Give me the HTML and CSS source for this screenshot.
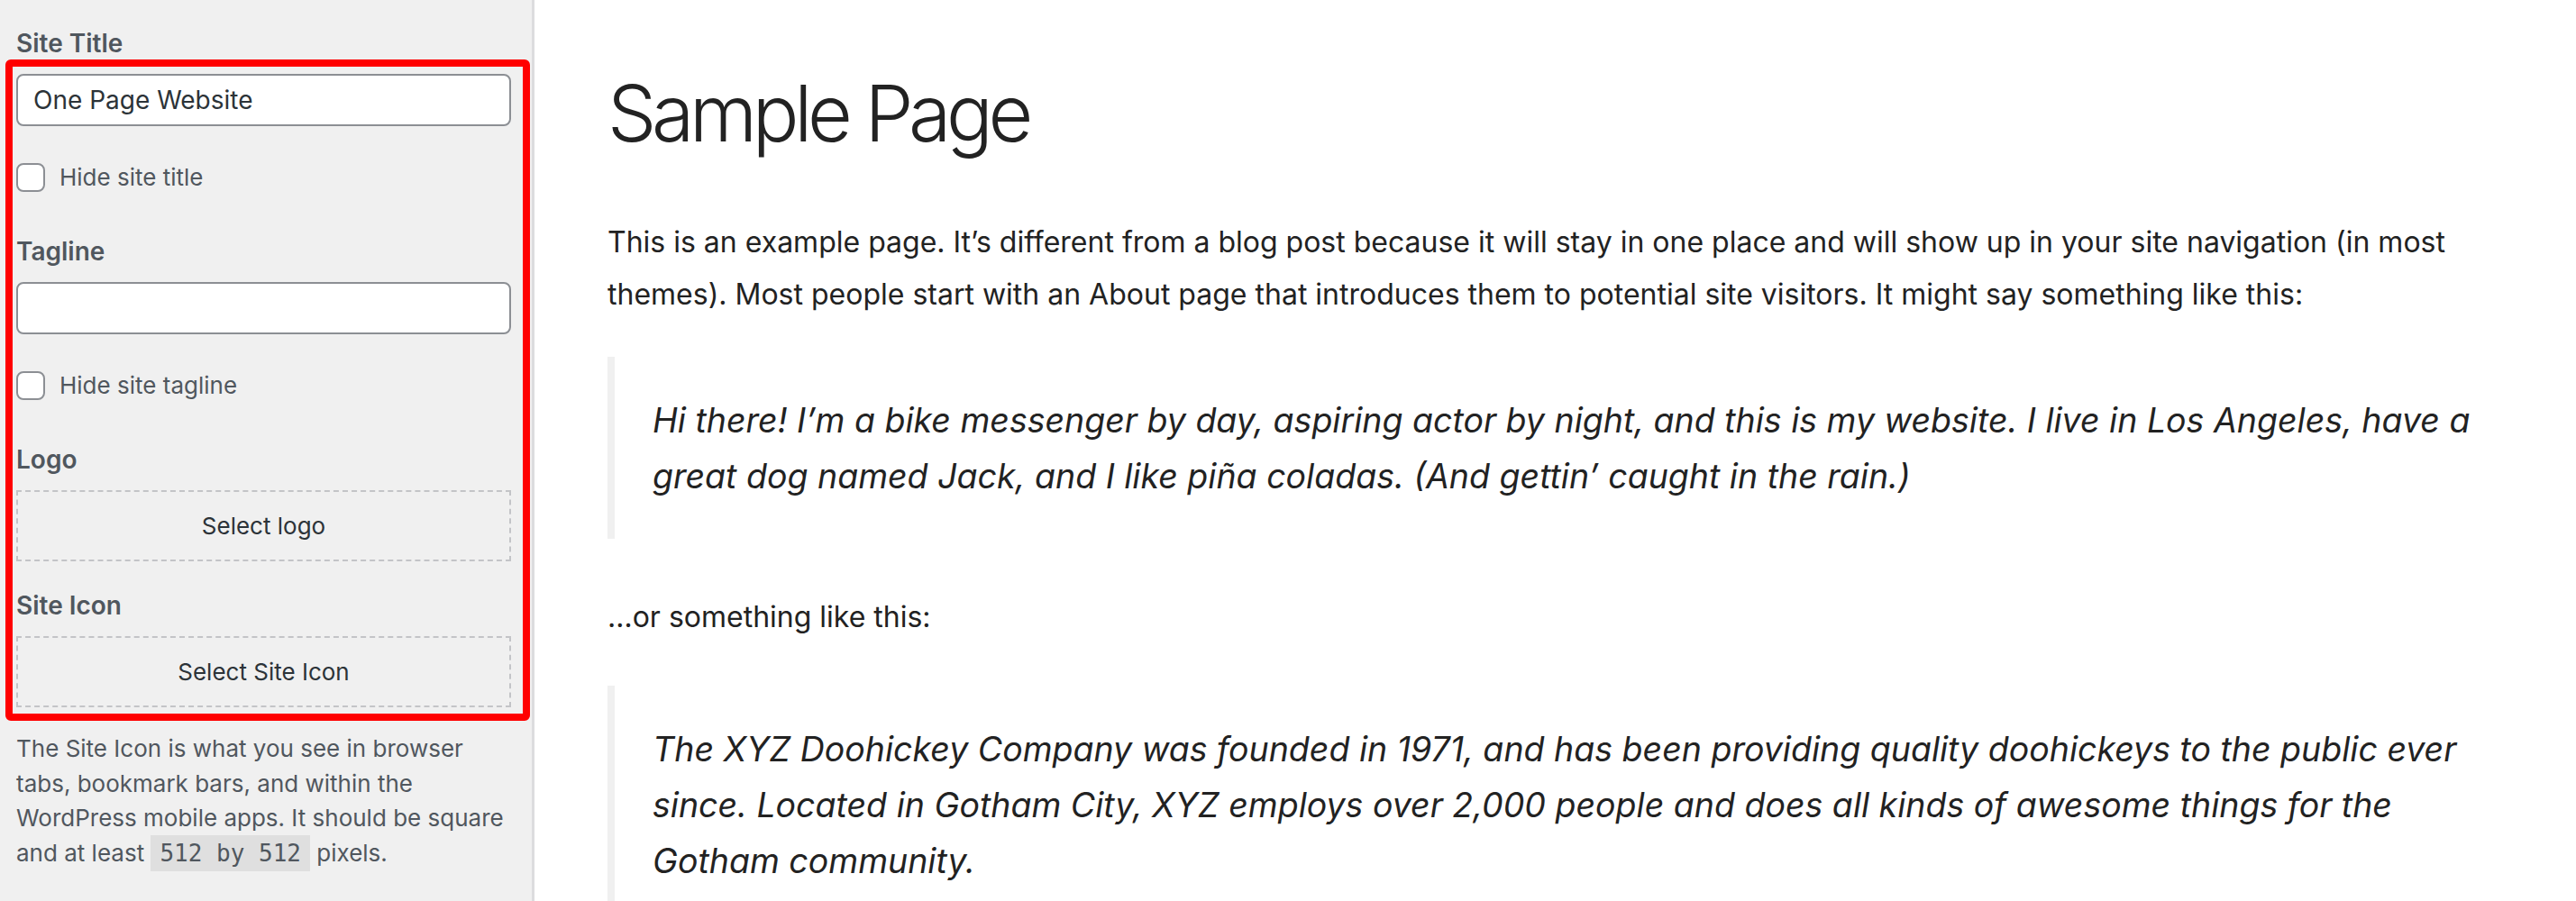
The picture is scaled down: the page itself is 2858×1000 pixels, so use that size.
FILE: index.html
```html
<!DOCTYPE html>
<html lang="en">
<head>
<meta charset="utf-8">
<title>Customize: Sample Page</title>
<link rel="stylesheet" href="styles.css">
</head>
<body>
<div class="app">
  <aside class="sidebar">
    <div class="control-title title-top">Site Title</div>
    <div class="highlight">
      <input class="text-input" type="text" value="One Page Website">
      <label class="check"><input type="checkbox" class="check-box">Hide site title</label>
      <div class="control-title">Tagline</div>
      <input class="text-input" type="text" value="">
      <label class="check"><input type="checkbox" class="check-box">Hide site tagline</label>
      <div class="control-title">Logo</div>
      <button class="select-btn" type="button">Select logo</button>
      <div class="control-title icon-title">Site Icon</div>
      <button class="select-btn" type="button">Select Site Icon</button>
    </div>
    <p class="description">The Site Icon is what you see in browser tabs, bookmark bars, and within the WordPress mobile apps. It should be square and at least <code>512 by 512</code> pixels.</p>
  </aside>
  <main class="preview">
    <div class="content">
      <h1 class="page-title">Sample Page</h1>
      <p class="para">This is an example page. It’s different from a blog post because it will stay in one place and will show up in your site navigation (in most themes). Most people start with an About page that introduces them to potential site visitors. It might say something like this:</p>
      <blockquote class="quote">
        <p>Hi there! I’m a bike messenger by day, aspiring actor by night, and this is my website. I live in Los Angeles, have a great dog named Jack, and I like piña coladas. (And gettin’ caught in the rain.)</p>
      </blockquote>
      <p class="para after-quote">…or something like this:</p>
      <blockquote class="quote quote-two">
        <p>The XYZ Doohickey Company was founded in 1971, and has been providing quality doohickeys to the public ever since. Located in Gotham City, XYZ employs over 2,000 people and does all kinds of awesome things for the Gotham community.</p>
      </blockquote>
    </div>
  </main>
</div>
</body>
</html>
```

FILE: styles.css
```css
html, body {
  margin: 0;
  padding: 0;
  height: 1000px;
  overflow: hidden;
  background: #fff;
}

.app {
  display: flex;
  height: 1000px;
  font-family: "Inter", "Noto Sans", sans-serif;
}

.sidebar {
  box-sizing: border-box;
  flex: 0 0 593px;
  width: 593px;
  height: 1000px;
  background: #f0f0f0;
  border-right: 3px solid #dcdcde;
  padding: 31px 23px 0 18px;
}

.control-title {
  font-size: 28px;
  font-weight: 600;
  line-height: 35px;
  color: #50575e;
  margin: 49px 0 16px;
}

.title-top {
  margin: 0;
}

.icon-title {
  margin-top: 32px;
}

.highlight {
  margin: 0 -21px 0 -12px;
  border: 8px solid #ff0000;
  border-radius: 6px;
  padding: 8px 13px 7px 4px;
}

.text-input {
  display: block;
  box-sizing: border-box;
  width: 100%;
  height: 58px;
  margin: 0;
  padding: 0 17px;
  border: 2px solid #8c8f94;
  border-radius: 8px;
  background: #fff;
  font-family: "Inter", "Noto Sans", sans-serif;
  font-size: 28px;
  color: #2c3338;
  outline: none;
}

.check {
  display: flex;
  align-items: center;
  gap: 16px;
  height: 32px;
  margin-top: 41px;
  font-size: 26px;
  line-height: 32px;
  color: #50575e;
}

.check-box {
  appearance: none;
  -webkit-appearance: none;
  box-sizing: border-box;
  width: 32px;
  height: 32px;
  margin: 0;
  border: 2px solid #8c8f94;
  border-radius: 8px;
  background: #fff;
}

.select-btn {
  display: block;
  box-sizing: border-box;
  width: 100%;
  height: 79px;
  margin: 0;
  padding: 0;
  border: 2px dashed #c3c4c7;
  border-radius: 0;
  background: transparent;
  font-family: "Inter", "Noto Sans", sans-serif;
  font-size: 26px;
  color: #2c3338;
}

.description {
  margin: 12px 0 0;
  font-size: 26px;
  line-height: 38.5px;
  color: #50575e;
}

.description code {
  font-family: "DejaVu Sans Mono", monospace;
  font-size: 26px;
  padding: 5px 10px;
  background: rgba(0, 0, 0, 0.07);
  color: #50575e;
}

.preview {
  flex: 1;
  background: #fff;
  padding-top: 73px;
}

.content {
  margin-left: 81px;
  width: 2100px;
  color: #222;
}

.page-title {
  margin: 0;
  font-size: 86px;
  font-weight: 300;
  line-height: 106px;
  letter-spacing: -5.3px;
  color: #222;
}

.para {
  margin: 61px 0 0;
  font-size: 32px;
  line-height: 58px;
}

.after-quote {
  margin-top: 58px;
}

.quote {
  margin: 40px 0 0;
  border-left: 8px solid #f0f0f0;
  padding: 40px 0 38px 42px;
}

.quote-two {
  margin-top: 47px;
}

.quote p {
  margin: 0;
  font-size: 37.5px;
  font-style: italic;
  line-height: 62px;
}
```
